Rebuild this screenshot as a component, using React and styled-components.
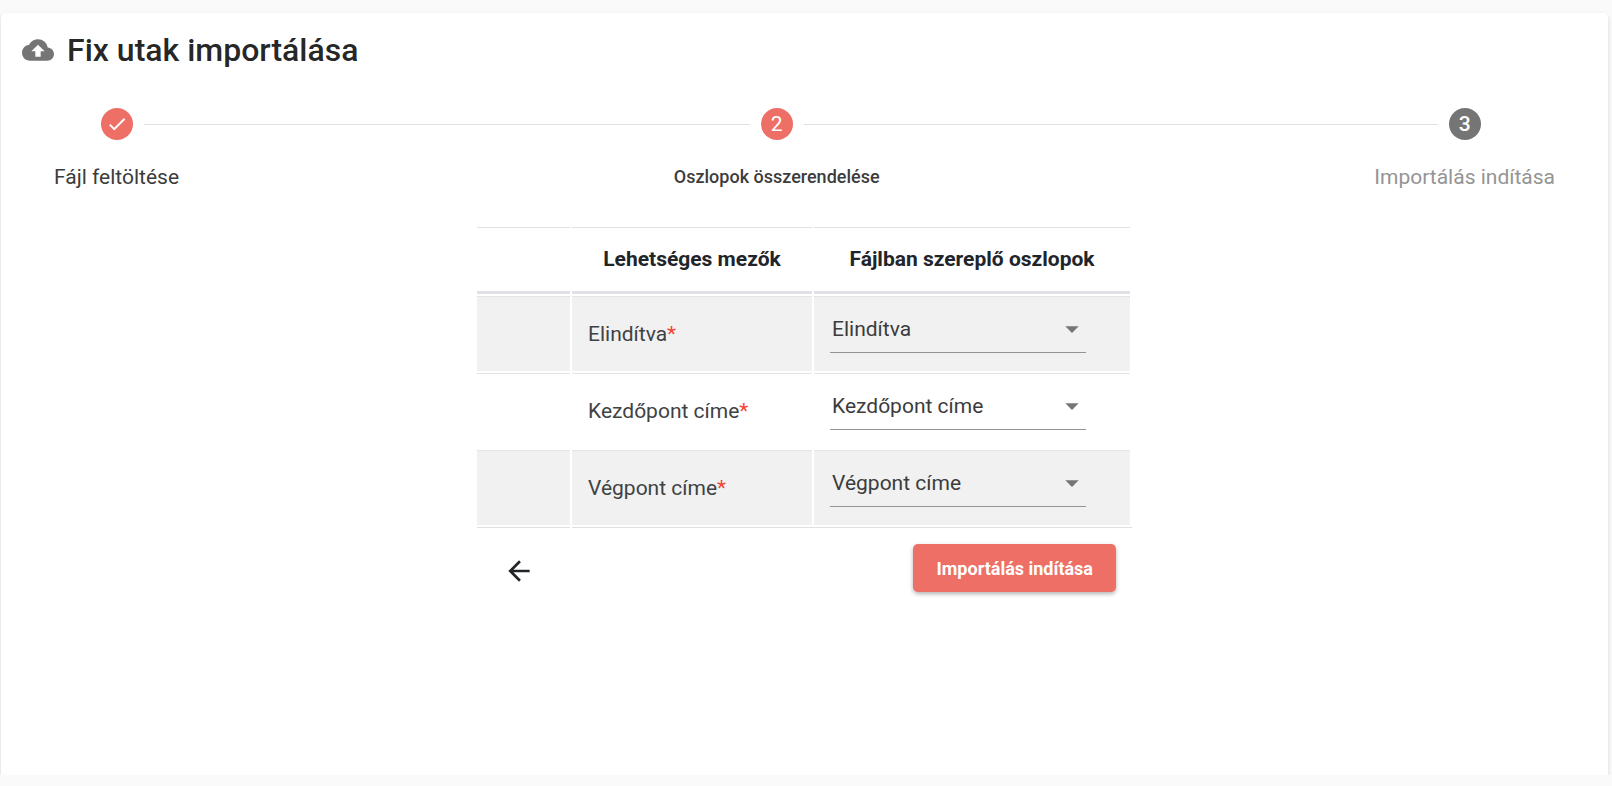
import { useState } from "react";
import styled, { createGlobalStyle } from "styled-components";
import { MdArrowBack, MdArrowDropDown, MdCheck, MdCloudUpload } from "react-icons/md";

const columns = ["Elindítva", "Kezdőpont címe", "Végpont címe"];

const steps = [
  { label: "Fájl feltöltése", state: "done" },
  { label: "Oszlopok összerendelése", state: "active" },
  { label: "Importálás indítása", state: "pending" },
];

const Stepper = () => (
  <StepList>
    {steps.map((step, i) => (
      <Step key={step.label} $state={step.state}>
        <StepMark>
          <Line $hidden={i === 0} />
          <Circle $state={step.state}>
            {step.state === "done" ? <MdCheck /> : i + 1}
          </Circle>
          <Line $hidden={i === steps.length - 1} />
        </StepMark>
        <StepLabel $state={step.state}>{step.label}</StepLabel>
      </Step>
    ))}
  </StepList>
);

const FieldRow = ({ name, index }) => {
  const [value, setValue] = useState(name);
  const id = `field-${index}`;

  return (
    <tr>
      <Cell />
      <Cell>
        <label htmlFor={id}>
          {name}
          <Required>*</Required>
        </label>
      </Cell>
      <Cell>
        <SelectWrapper>
          <Select id={id} value={value} onChange={(e) => setValue(e.target.value)}>
            {columns.map((column) => (
              <option key={column}>{column}</option>
            ))}
          </Select>
          <MdArrowDropDown />
        </SelectWrapper>
      </Cell>
    </tr>
  );
};

const App = () => (
  <Page>
    <GlobalStyle />
    <Content>
      <Card>
        <Title>
          <MdCloudUpload />
          Fix utak importálása
        </Title>
        <Stepper />
        <Table>
          <colgroup>
            <Col $width={93} />
            <Col $width={240} />
            <Col $width={316} />
            <Col $width={0} />
          </colgroup>
          <thead>
            <tr>
              <HeadCell />
              <HeadCell>Lehetséges mezők</HeadCell>
              <HeadCell>Fájlban szereplő oszlopok</HeadCell>
            </tr>
          </thead>
          <tbody>
            {columns.map((name, i) => (
              <FieldRow key={name} name={name} index={i} />
            ))}
          </tbody>
          <tfoot>
            <tr>
              <FootCell>
                <IconButton type="button" aria-label="Vissza">
                  <MdArrowBack />
                </IconButton>
              </FootCell>
              <FootCell colSpan={3} $right>
                <PrimaryButton type="button">Importálás indítása</PrimaryButton>
              </FootCell>
            </tr>
          </tfoot>
        </Table>
      </Card>
    </Content>
  </Page>
);

export default App;

const GlobalStyle = createGlobalStyle`
  * {
    box-sizing: border-box;
  }

  body {
    margin: 0;
    background: #fafafa;
    font-family: Roboto, "Open Sans", sans-serif;
    font-size: 21px;
    color: rgba(0, 0, 0, 0.87);
  }
`;

const Page = styled.div`
  display: flex;
  flex-direction: column;
  min-height: 100vh;
  padding-bottom: 11px;
`;

const Content = styled.main`
  display: flex;
  flex: 1;
  overflow: hidden;
  padding: 13px 4px 0 1px;
`;

const Card = styled.section`
  flex: 1;
  min-width: 0;
  padding: 16px 21px;
  background: #fff;
  border-radius: 5px 5px 0 0;
  box-shadow: 0 2px 4px rgba(0, 0, 0, 0.15);
`;

const Title = styled.h1`
  display: flex;
  align-items: center;
  gap: 13px;
  margin: 0;
  font-size: 32px;
  line-height: 42px;
  font-weight: 500;

  svg {
    width: 32px;
    height: 32px;
    color: #757575;
  }
`;

const StepList = styled.ol`
  display: flex;
  margin: 37px 0 0;
  padding: 0;
  list-style: none;
`;

const Step = styled.li`
  display: flex;
  flex-direction: column;
  flex: ${({ $state }) => ($state === "active" ? "1 1 auto" : "0 0 auto")};
`;

const StepMark = styled.div`
  display: flex;
  align-items: center;
  gap: 11px;
`;

const Line = styled.span`
  flex: 1;
  height: 1px;
  background: ${({ $hidden }) => ($hidden ? "transparent" : "#e0e0e0")};
`;

const Circle = styled.span`
  display: flex;
  align-items: center;
  justify-content: center;
  width: 32px;
  height: 32px;
  border-radius: 50%;
  background: ${({ $state }) => ($state === "pending" ? "#757575" : "#ed6f66")};
  color: #fff;
  font-size: 21px;
  font-weight: ${({ $state }) => ($state === "pending" ? 500 : 400)};

  svg {
    width: 22px;
    height: 22px;
  }
`;

const StepLabel = styled.span`
  padding: 0 32px;
  margin-top: 23px;
  line-height: 28px;
  text-align: center;
  font-size: ${({ $state }) => ($state === "active" ? "18px" : "21px")};
  font-weight: ${({ $state }) => ($state === "active" ? 500 : 400)};
  color: ${({ $state }) => ($state === "pending" ? "#949494" : "#3c3c3c")};
`;

const Table = styled.table`
  table-layout: fixed;
  width: 659px;
  margin: 34px auto 0;
  border-collapse: separate;
  border-spacing: 2px;
  color: #212529;
`;

const Col = styled.col`
  width: ${({ $width }) => $width}px;
`;

const HeadCell = styled.th`
  height: 67px;
  padding: 0 16px 2px;
  border-top: 1px solid #e0e0e0;
  border-bottom: 3px solid #e0e1e6;
  font-weight: 700;
  white-space: nowrap;
`;

const Cell = styled.td`
  height: 75px;
  padding: 0 16px;
  border-top: 1px solid #e3e4e5;
  color: #3f4245;

  tr:nth-child(odd) > & {
    background: #f1f1f1;
  }
`;

const Required = styled.span`
  color: #f44336;
`;

const SelectWrapper = styled.div`
  position: relative;
  width: 256px;
  max-width: 100%;
  margin-bottom: 2px;

  svg {
    position: absolute;
    top: 0;
    right: -2px;
    width: 32px;
    height: 32px;
    color: #757575;
    pointer-events: none;
  }
`;

const Select = styled.select`
  display: block;
  width: 100%;
  height: 40px;
  padding: 0 30px 8px 2px;
  border: 0;
  border-bottom: 1px solid #949494;
  border-radius: 0;
  outline: none;
  appearance: none;
  background: transparent;
  font: inherit;
  color: #3c3c3c;
  cursor: pointer;
`;

const FootCell = styled.td`
  padding: 16px;
  border-top: 1px solid #e0e0e0;
  vertical-align: top;
  text-align: ${({ $right }) => ($right ? "right" : "left")};
`;

const IconButton = styled.button`
  display: flex;
  align-items: center;
  justify-content: center;
  width: 52px;
  height: 54px;
  padding: 0;
  border: 0;
  border-radius: 50%;
  background: transparent;
  color: #212529;
  cursor: pointer;

  svg {
    width: 32px;
    height: 32px;
  }
`;

const PrimaryButton = styled.button`
  height: 48px;
  padding: 0 23px;
  border: 0;
  border-radius: 5px;
  background: #ed6f66;
  box-shadow: 0 2px 4px rgba(0, 0, 0, 0.3);
  color: #fff;
  font-family: inherit;
  font-size: 18px;
  font-weight: 700;
  cursor: pointer;
`;
